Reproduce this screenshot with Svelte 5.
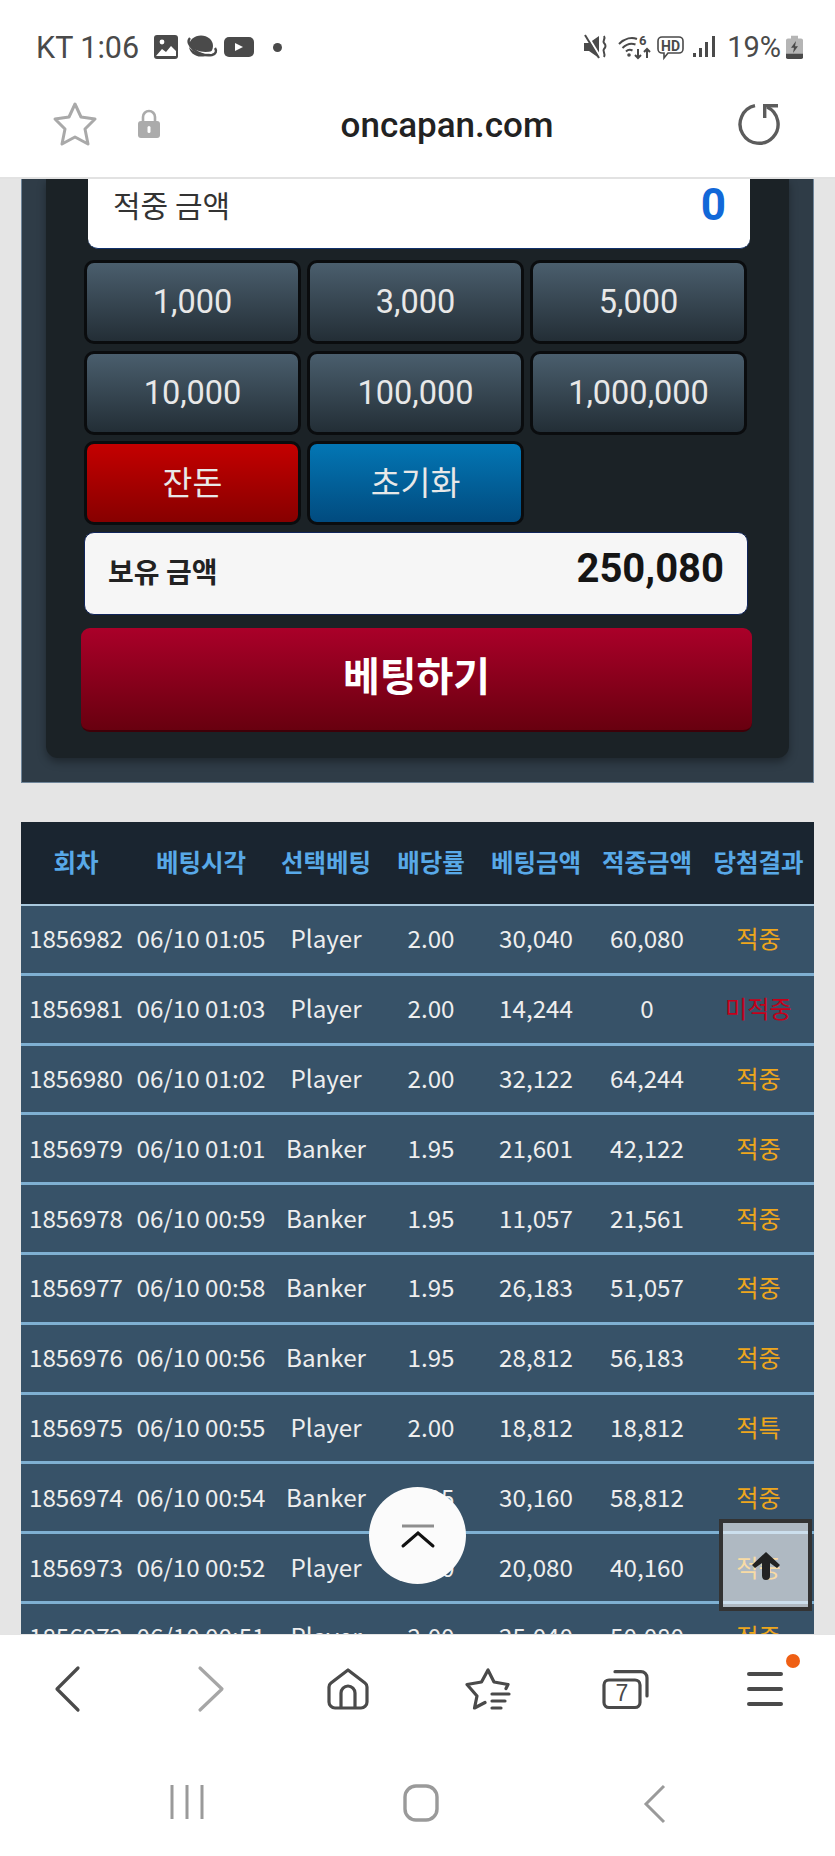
<script>
  const amounts = ['1,000', '3,000', '5,000', '10,000', '100,000', '1,000,000'];
  const rows = [
    ['1856982', '06/10 01:05', 'Player', '2.00', '30,040', '60,080', '적중'],
    ['1856981', '06/10 01:03', 'Player', '2.00', '14,244', '0', '미적중'],
    ['1856980', '06/10 01:02', 'Player', '2.00', '32,122', '64,244', '적중'],
    ['1856979', '06/10 01:01', 'Banker', '1.95', '21,601', '42,122', '적중'],
    ['1856978', '06/10 00:59', 'Banker', '1.95', '11,057', '21,561', '적중'],
    ['1856977', '06/10 00:58', 'Banker', '1.95', '26,183', '51,057', '적중'],
    ['1856976', '06/10 00:56', 'Banker', '1.95', '28,812', '56,183', '적중'],
    ['1856975', '06/10 00:55', 'Player', '2.00', '18,812', '18,812', '적특'],
    ['1856974', '06/10 00:54', 'Banker', '1.95', '30,160', '58,812', '적중'],
    ['1856973', '06/10 00:52', 'Player', '2.00', '20,080', '40,160', '적중'],
    ['1856972', '06/10 00:51', 'Player', '2.00', '25,040', '50,080', '적중']
  ];
  const heads = ['회차', '베팅시각', '선택베팅', '배당률', '베팅금액', '적중금액', '당첨결과'];
</script>

<div class="phone">
  <div class="status">
    <span class="clock">KT 1:06</span>
    <svg class="notif" width="104" height="26" viewBox="0 0 104 26">
      <rect x="0" y="1" width="24" height="24" rx="3" fill="#4a4a4a"/>
      <circle cx="8" cy="8" r="2.4" fill="#fff"/>
      <path d="M2 22l6-7 4 3 5-6 5 5v5z" fill="#fff"/>
      <ellipse cx="47" cy="12" rx="12" ry="10.500" fill="#4a4a4a"/>
      <path d="M34 8c1 8 12 13 25 10" fill="none" stroke="#fff" stroke-width="2"/>
      <path d="M36 4c-6 6 8 19 22 17 4-1 5-4 3-7" fill="none" stroke="#4a4a4a" stroke-width="2.400"/>
      <rect x="70" y="3" width="30" height="20" rx="5" fill="#4a4a4a"/>
      <path d="M81 9l8 4-8 4z" fill="#fff"/>
    </svg>
    <span class="dot"></span>
    <span class="grow"></span>
    <svg width="23" height="24" viewBox="0 0 23 24">
      <path d="M0 8h5l10-7v22L5 16H0z" fill="#4a4a4a"/>
      <path d="M3 0l14 23" stroke="#fff" stroke-width="2.400"/>
      <path d="M1 0l14 23" stroke="#4a4a4a" stroke-width="2"/>
      <path d="M20 1c2 3-2 5 0 7s2 4 0 6 2 4 0 8" fill="none" stroke="#4a4a4a" stroke-width="2"/>
    </svg>
    <svg class="wifi" width="33" height="24" viewBox="0 0 33 24">
      <path d="M1 9c6-6 13-7 18-5M4.500 13c4-4 9-5 13-3.500M8 16.500c2-2 4.500-2 6.500-1" fill="none" stroke="#4a4a4a" stroke-width="2"/>
      <circle cx="11" cy="20" r="1.800" fill="#4a4a4a"/>
      <path d="M20 14v9m-3-3l3 3 3-3M29 23v-9m-3 3l3-3 3 3" fill="none" stroke="#4a4a4a" stroke-width="2"/>
      <text x="21" y="10" class="wifi-six">6</text>
    </svg>
    <svg class="hd" width="27" height="23" viewBox="0 0 27 23">
      <path d="M5 1h17a4 4 0 014 4v8a4 4 0 01-4 4H11l-4 5v-5H5a4 4 0 01-4-4V5a4 4 0 014-4z" fill="none" stroke="#4a4a4a" stroke-width="1.600"/>
      <text x="13.500" y="14.500" class="hd-text">HD</text>
    </svg>
    <svg class="bars" width="22" height="24" viewBox="0 0 22 24">
      <rect x="0" y="18" width="3" height="4" fill="#4a4a4a"/>
      <rect x="6" y="13" width="3" height="9" fill="#4a4a4a"/>
      <rect x="12" y="7" width="3" height="15" fill="#4a4a4a"/>
      <rect x="19" y="1" width="3" height="21" fill="#4a4a4a"/>
    </svg>
    <span class="pct">19%</span>
    <svg width="17" height="24" viewBox="0 0 17 28" preserveAspectRatio="none">
      <path d="M5 1h7v3h3a2 2 0 012 2v20a2 2 0 01-2 2H2a2 2 0 01-2-2V6a2 2 0 012-2h3z" fill="#b5b5b5"/>
      <path d="M0 22h17v4a2 2 0 01-2 2H2a2 2 0 01-2-2z" fill="#4a4a4a"/>
      <path d="M10 7l-5 8h3l-1 6 5-8H9z" fill="#4a4a4a"/>
    </svg>
  </div>

  <div class="address">
    <svg class="star" width="46" height="46" viewBox="0 0 46 46">
      <path d="M23 3l6 13 14 2-10 10 3 15-13-7-13 7 3-15L3 18l14-2z" fill="none" stroke="#a9a9a9" stroke-width="3" stroke-linejoin="round"/>
    </svg>
    <svg class="lock" width="24" height="30" viewBox="0 0 24 30">
      <path d="M6 13V8a6 6 0 0112 0v5" fill="none" stroke="#ababab" stroke-width="2.600"/>
      <rect x="1" y="12" width="22" height="17" rx="3" fill="#ababab"/>
      <rect x="10.500" y="17" width="3" height="7" rx="1.500" fill="#fff"/>
    </svg>
    <span class="url">oncapan.com</span>
    <svg class="reload" width="44" height="44" viewBox="0 0 44 44">
      <path d="M16 3.700A19 19 0 1 0 28 5" fill="none" stroke="#5c5c5c" stroke-width="3.400"/>
      <path d="M39 3.700H25.700V16" fill="none" stroke="#5c5c5c" stroke-width="3.400"/>
    </svg>
  </div>

  <div class="content">
    <div class="panel">
      <div class="inner">
        <div class="win-box">
          <span class="win-label">적중 금액</span>
          <span class="win-value">0</span>
        </div>
        <div class="chips">
          {#each amounts as a}
            <button class="chip">{a}</button>
          {/each}
          <button class="chip red">잔돈</button>
          <button class="chip blue">초기화</button>
        </div>
        <div class="hold-box">
          <span class="hold-label">보유 금액</span>
          <span class="hold-value">250,080</span>
        </div>
        <button class="bet">베팅하기</button>
      </div>
    </div>

    <table>
      <colgroup>
        <col class="c110"/><col class="c140"/><col class="c110"/><col class="c100"/><col class="c110"/><col class="c112"/><col class="c111"/>
      </colgroup>
      <thead>
        <tr>
          {#each heads as h}<th>{h}</th>{/each}
        </tr>
      </thead>
      <tbody>
        {#each rows as r}
          <tr>
            <td>{r[0]}</td>
            <td>{r[1]}</td>
            <td>{r[2]}</td>
            <td>{r[3]}</td>
            <td>{r[4]}</td>
            <td>{r[5]}</td>
            <td class:win={r[6] !== '미적중'} class:lose={r[6] === '미적중'}>{r[6]}</td>
          </tr>
        {/each}
      </tbody>
    </table>

    <div class="round-top">
      <svg width="34" height="24" viewBox="0 0 34 24">
        <path d="M1 2h32" stroke="#8e8e8e" stroke-width="3"/>
        <path d="M2 22L17 9l15 13" fill="none" stroke="#111" stroke-width="3" stroke-linecap="round"/>
      </svg>
    </div>
    <div class="square-top">
      <svg width="30" height="30" viewBox="0 0 30 30">
        <path d="M15 2L1 15l3 3 7-5v13a4 4 0 008 0V13l7 5 3-3z" fill="#222"/>
      </svg>
    </div>
  </div>

  <div class="toolbar">
    <svg width="48" height="46" viewBox="0 0 48 46">
      <path d="M32 2L11 23l21 21" fill="none" stroke="#4a4a4a" stroke-width="3.200" stroke-linecap="round" stroke-linejoin="round"/>
    </svg>
    <svg width="48" height="46" viewBox="0 0 48 46">
      <path d="M15 2l22 21-22 21" fill="none" stroke="#a6a6a6" stroke-width="3.200" stroke-linecap="round" stroke-linejoin="round"/>
    </svg>
    <svg width="42" height="42" viewBox="0 0 42 42">
      <path d="M21 2L4 15a5 5 0 00-2 4v15a6 6 0 006 6h26a6 6 0 006-6V19a5 5 0 00-2-4z" fill="none" stroke="#4a4a4a" stroke-width="3.200" stroke-linejoin="round"/>
      <path d="M14 40V25a7 7 0 0114 0v15" fill="none" stroke="#4a4a4a" stroke-width="3.200"/>
    </svg>
    <svg width="48" height="42" viewBox="0 0 48 42">
      <path d="M43 20.500L45 16.500 31 14 25 2 18.500 14 4 16.500 14 28 11.500 40 22 34.500" fill="none" stroke="#4a4a4a" stroke-width="3.200" stroke-linecap="round" stroke-linejoin="round"/>
      <path d="M29 26h17M29 33h13M29 40h9" stroke="#4a4a4a" stroke-width="3.200" stroke-linecap="round"/>
    </svg>
    <svg width="48" height="42" viewBox="0 0 48 42">
      <rect x="2" y="12" width="36" height="27.500" rx="5" fill="none" stroke="#4a4a4a" stroke-width="3.200"/>
      <path d="M13 3.700h26a6 6 0 016 6V28" fill="none" stroke="#4a4a4a" stroke-width="3.200" stroke-linecap="round"/>
      <text x="20" y="33" class="tab-count">7</text>
    </svg>
    <div class="menu">
      <span></span><span></span><span></span>
      <i class="badge"></i>
    </div>
  </div>

  <div class="navbar">
    <svg width="34" height="36" viewBox="0 0 34 36">
      <path d="M2 1v34M17 1v34M32 1v34" stroke="#9a9a9a" stroke-width="3"/>
    </svg>
    <svg width="36" height="38" viewBox="0 0 36 38">
      <rect x="2" y="2" width="32" height="34" rx="11" fill="none" stroke="#9a9a9a" stroke-width="3.400"/>
    </svg>
    <svg width="24" height="40" viewBox="0 0 24 40">
      <path d="M21 2L3 20l18 18" fill="none" stroke="#9a9a9a" stroke-width="3"/>
    </svg>
  </div>
</div>

<style>
  :global(body) {
    margin: 0;
    background: #fff;
  }
  svg { overflow: visible; }
  .phone {
    width: 835px;
    height: 1856px;
    display: flex;
    flex-direction: column;
    overflow: hidden;
    font-family: "Noto Sans CJK KR", "Noto Sans", sans-serif;
  }
  .status {
    height: 72px;
    flex: none;
    display: flex;
    align-items: center;
    padding: 22px 32px 0 36px;
    box-sizing: border-box;
    color: #4a4a4a;
  }
  .clock {
    font: 30.5px Roboto, sans-serif;
    margin-right: 15px;
    white-space: nowrap;
  }
  .notif { margin-right: 15px; }
  .dot {
    width: 9px;
    height: 9px;
    border-radius: 50%;
    background: #4a4a4a;
  }
  .grow { flex: 1; }
  .wifi { margin-left: 11px; }
  .wifi-six { font: bold 13px Roboto, sans-serif; fill: #4a4a4a; }
  .hd { margin-left: 6px; }
  .hd-text { font: bold 14px Roboto, sans-serif; fill: #4a4a4a; text-anchor: middle; }
  .bars { margin-left: 9px; }
  .pct { font: 29px Roboto, sans-serif; margin: 0 5px 0 12px; }
  .address {
    height: 107px;
    flex: none;
    display: flex;
    align-items: center;
    box-sizing: border-box;
    padding: 0 52px 2px;
    border-bottom: 2px solid #e2e2e2;
  }
  .star { margin-right: 39px; }
  .url {
    flex: 1;
    text-align: center;
    font: 500 35px Roboto, sans-serif;
    color: #222;
    margin: 4px 6px 0 0;
  }
  .content {
    flex: 1;
    min-height: 0;
    overflow: hidden;
    position: relative;
    background: #e5e5e5;
    padding: 0 21px;
  }
  .panel {
    background: #2f3c47;
    border: 1px solid #6f8599;
    border-top: none;
    padding: 0 24px 24px;
    margin-bottom: 39px;
  }
  .inner {
    background: #1b2226;
    border-radius: 0 0 12px 12px;
    box-shadow: 0 4px 8px rgba(0, 0, 0, 0.35);
    padding: 0 41px 26px 38px;
    height: 579px;
    box-sizing: border-box;
  }
  .win-box {
    height: 70px;
    margin: 0 -2px 0 4px;
    background: #fff;
    border-bottom: 1px solid #10306a;
    border-radius: 0 0 10px 10px;
    display: flex;
    justify-content: space-between;
    padding: 3px 24px 0 25px;
    box-sizing: border-box;
  }
  .win-label { font-size: 30px; line-height: 44px; color: #333; }
  .win-value { font: bold 44px/46px Roboto, sans-serif; color: #1268d8; }
  .chips {
    display: grid;
    grid-template-columns: repeat(3, 217px);
    grid-auto-rows: 84px;
    gap: 6.500px 6px;
    margin-top: 11px;
  }
  .chip {
    border: 3px solid #0a0c0e;
    border-radius: 10px;
    background: linear-gradient(#4a5e6d, #232e36);
    color: #e8e8e8;
    font: 32.5px Roboto, "Noto Sans CJK KR", sans-serif;
    padding: 0;
  }
  .chip.red { background: linear-gradient(#c40000, #870000); padding-bottom: 6px; }
  .chip.blue { background: linear-gradient(#0376b4, #014b7f); padding-bottom: 6px; }
  .hold-box {
    height: 83px;
    margin-top: 7px;
    background: #f6f6f6;
    border: 1px solid #10245a;
    border-radius: 10px;
    box-sizing: border-box;
    display: flex;
    justify-content: space-between;
    align-items: center;
    padding: 0 23px;
  }
  .hold-label { font-size: 28px; font-weight: 700; color: #222; margin-top: -6px; }
  .hold-value { font: bold 40px Roboto, sans-serif; color: #151515; margin-top: -10px; }
  .bet {
    display: block;
    width: 671px;
    height: 104px;
    margin: 13px 0 0 -3px;
    border: none;
    border-bottom: 2px solid #3e0008;
    border-radius: 9px;
    background: linear-gradient(#aa0029, #68000f);
    color: #fff;
    font-family: "Noto Sans CJK KR", sans-serif;
    font-size: 40px;
    font-weight: 700;
    padding: 0 0 10px;
  }
  table {
    width: 793px;
    table-layout: fixed;
    border-collapse: separate;
    border-spacing: 0;
    color: #eee;
  }
  .c110 { width: 110px; }
  .c140 { width: 140px; }
  .c100 { width: 100px; }
  .c112 { width: 112px; }
  .c111 { width: 111px; }
  th {
    height: 84px;
    background: #1a2530;
    color: #58a9e8;
    font-size: 24.5px;
    font-weight: 700;
    padding: 0 0 4px;
    box-sizing: border-box;
    border-bottom: 2px solid #a9c9de;
  }
  td {
    height: 69.800px;
    box-sizing: border-box;
    background: #375268;
    font-size: 24.2px;
    text-align: center;
    padding: 0 0 3px;
    border-bottom: 3px solid #7fb0d2;
    white-space: nowrap;
  }
  .win { color: #eea61c; }
  .lose { color: #c4001a; }
  .round-top {
    position: absolute;
    left: 369px;
    top: 1308px;
    width: 97px;
    height: 97px;
    border-radius: 50%;
    background: #fbfbfb;
    display: flex;
    align-items: center;
    justify-content: center;
  }
  .square-top {
    position: absolute;
    left: 719px;
    top: 1340px;
    width: 93px;
    height: 92px;
    box-sizing: border-box;
    border: 4px solid #333;
    background: rgba(255, 255, 255, 0.6);
    display: flex;
    align-items: center;
    justify-content: center;
  }
  .toolbar {
    height: 144px;
    flex: none;
    box-sizing: border-box;
    background: #fff;
    border-top: 1px solid #e4e4e4;
    display: grid;
    grid-template-columns: repeat(6, 1fr);
    align-items: center;
    justify-items: center;
    padding: 0 0 36px;
  }
  .tab-count { font: 23px "Liberation Sans", sans-serif; fill: #4a4a4a; text-anchor: middle; }
  .menu {
    width: 36px;
    display: flex;
    flex-direction: column;
    gap: 11px;
    position: relative;
  }
  .menu span {
    height: 4px;
    border-radius: 2px;
    background: #4a4a4a;
  }
  .badge {
    position: absolute;
    left: 39px;
    top: -18px;
    width: 14px;
    height: 14px;
    border-radius: 50%;
    background: #ef5f14;
  }
  .navbar {
    height: 78px;
    flex: none;
    box-sizing: border-box;
    background: #fff;
    display: grid;
    grid-template-columns: repeat(3, 234px);
    justify-content: center;
    justify-items: center;
    align-items: start;
    padding: 6px 0 0 6px;
  }
</style>
